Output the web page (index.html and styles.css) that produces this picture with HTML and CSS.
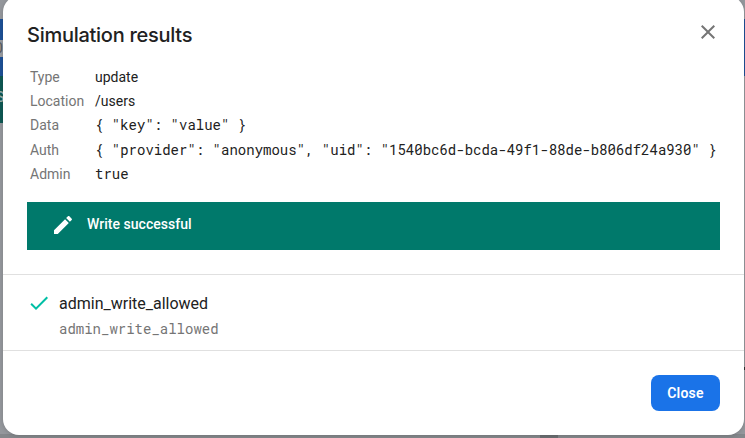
FILE: index.html
```html
<!DOCTYPE html>
<html lang="en">
<head>
<meta charset="utf-8">
<title>Simulation results</title>
<link rel="stylesheet" href="styles.css">
</head>
<body>
<div class="backdrop" aria-hidden="true">
  <div class="bar bar-blue"><span class="chip">0</span></div>
  <div class="bar bar-teal">S</div>
  <div class="canvas"><span class="marker"></span></div>
  <div class="footer-strip"><span class="thumb"></span></div>
</div>
<main class="dialog" role="dialog">
  <header class="dialog-header">
    <h1>Simulation results</h1>
    <button class="icon-button" aria-label="Dismiss">
      <svg width="24" height="24" viewBox="0 0 24 24"><path d="M19 6.41L17.59 5 12 10.59 6.41 5 5 6.41 10.59 12 5 17.59 6.41 19 12 13.41 17.59 19 19 17.59 13.41 12z"/></svg>
    </button>
  </header>
  <dl class="details">
    <dt>Type</dt><dd>update</dd>
    <dt>Location</dt><dd>/users</dd>
    <dt>Data</dt><dd class="code">{ "key": "value" }</dd>
    <dt>Auth</dt><dd class="code">{ "provider": "anonymous", "uid": "1540bc6d-bcda-49f1-88de-b806df24a930" }</dd>
    <dt>Admin</dt><dd class="code">true</dd>
  </dl>
  <div class="banner">
    <svg width="24" height="24" viewBox="0 0 24 24"><path d="M3 17.25V21h3.75L17.81 9.94l-3.75-3.75L3 17.25zM20.71 7.04c.39-.39.39-1.02 0-1.41l-2.34-2.34c-.39-.39-1.02-.39-1.41 0l-1.83 1.83 3.75 3.75 1.83-1.83z"/></svg>
    <span>Write successful</span>
  </div>
  <section class="rule">
    <svg class="check" width="24" height="24" viewBox="0 0 24 24"><path d="M9 16.17L4.83 12l-1.42 1.41L9 19 21 7l-1.41-1.41z"/></svg>
    <div class="rule-text">
      <div class="rule-name">admin_write_allowed</div>
      <div class="rule-code code">admin_write_allowed</div>
    </div>
  </section>
  <footer class="actions"><button class="close">Close</button></footer>
</main>
</body>
</html>
```
FILE: styles.css
```css
* { box-sizing: border-box; }
body {
  margin: 0;
  height: 438px;
  overflow: hidden;
  position: relative;
  font-family: Roboto, "Liberation Sans", sans-serif;
  font-size: 14px;
  color: #212121;
}
button { border: 0; padding: 0; font: inherit; }
.backdrop {
  position: absolute;
  inset: 0;
  padding-top: 19px;
  background: #94979c;
  display: flex;
  flex-direction: column;
}
.bar-blue { height: 57px; padding-top: 21px; background: #1d5096; }
.chip {
  display: block;
  width: 10px;
  height: 17px;
  background: #989ba0;
  color: #55585d;
  line-height: 17px;
  text-indent: -5px;
}
.bar-teal {
  width: 600px;
  height: 47px;
  background: #0e5853;
  color: #94aaa8;
  font-weight: 500;
  line-height: 43px;
  text-indent: -4px;
}
.canvas { flex: 1; display: flex; justify-content: flex-end; padding-top: 244px; }
.marker { width: 2px; height: 3px; background: #303134; }
.footer-strip { height: 4px; padding-left: 540px; background: #84878b; }
.thumb { display: block; width: 18px; height: 4px; background: #6b6e71; }
.dialog {
  position: relative;
  width: 741px;
  height: 439px;
  margin: -4px 0 0 3px;
  background: #fff;
  border-radius: 16px;
  box-shadow: 0 1px 4px rgba(0, 0, 0, .15);
  display: flex;
  flex-direction: column;
}
.dialog-header {
  display: flex;
  justify-content: space-between;
  padding: 24px 24px 0;
  height: 72px;
}
h1 {
  margin: 0;
  font: 500 20px/30px Inter, "Open Sans", sans-serif;
  letter-spacing: -.27px;
}
.icon-button { width: 24px; height: 24px; background: none; fill: #757575; }
.details {
  margin: 0 0 0 27px;
  display: grid;
  grid-template-columns: 65px 1fr;
  grid-auto-rows: 24.2px;
  line-height: 19px;
}
dt { color: #757575; }
dd { margin: 0; white-space: pre; }
.code { font-family: "Roboto Mono", "DejaVu Sans Mono", monospace; }
.details .code { line-height: 17.8px; }
.banner {
  height: 48px;
  margin: 13px 24px 24px;
  padding: 0 0 2px 24px;
  background: #00796b;
  color: #fff;
  fill: #fff;
  font-weight: 500;
  display: flex;
  align-items: center;
  gap: 12px;
}
.banner span { margin-top: -1px; letter-spacing: .03px; }
.rule {
  height: 77px;
  border: solid #e0e0e0;
  border-width: 1px 0;
  padding: 16px 24px 0;
  display: flex;
  gap: 8px;
}
.rule-text { padding-top: 1px; }
.check { fill: #00bfa5; }
.rule-name { font-size: 16px; line-height: 24px; }
.rule-code { line-height: 26px; color: #757575; }
.actions { display: flex; justify-content: flex-end; padding: 24px 24px 0; }
.close {
  width: 69px;
  height: 36px;
  border-radius: 8px;
  background: #1a73e8;
  color: #fff;
  font-weight: 600;
  letter-spacing: .25px;
}
```
